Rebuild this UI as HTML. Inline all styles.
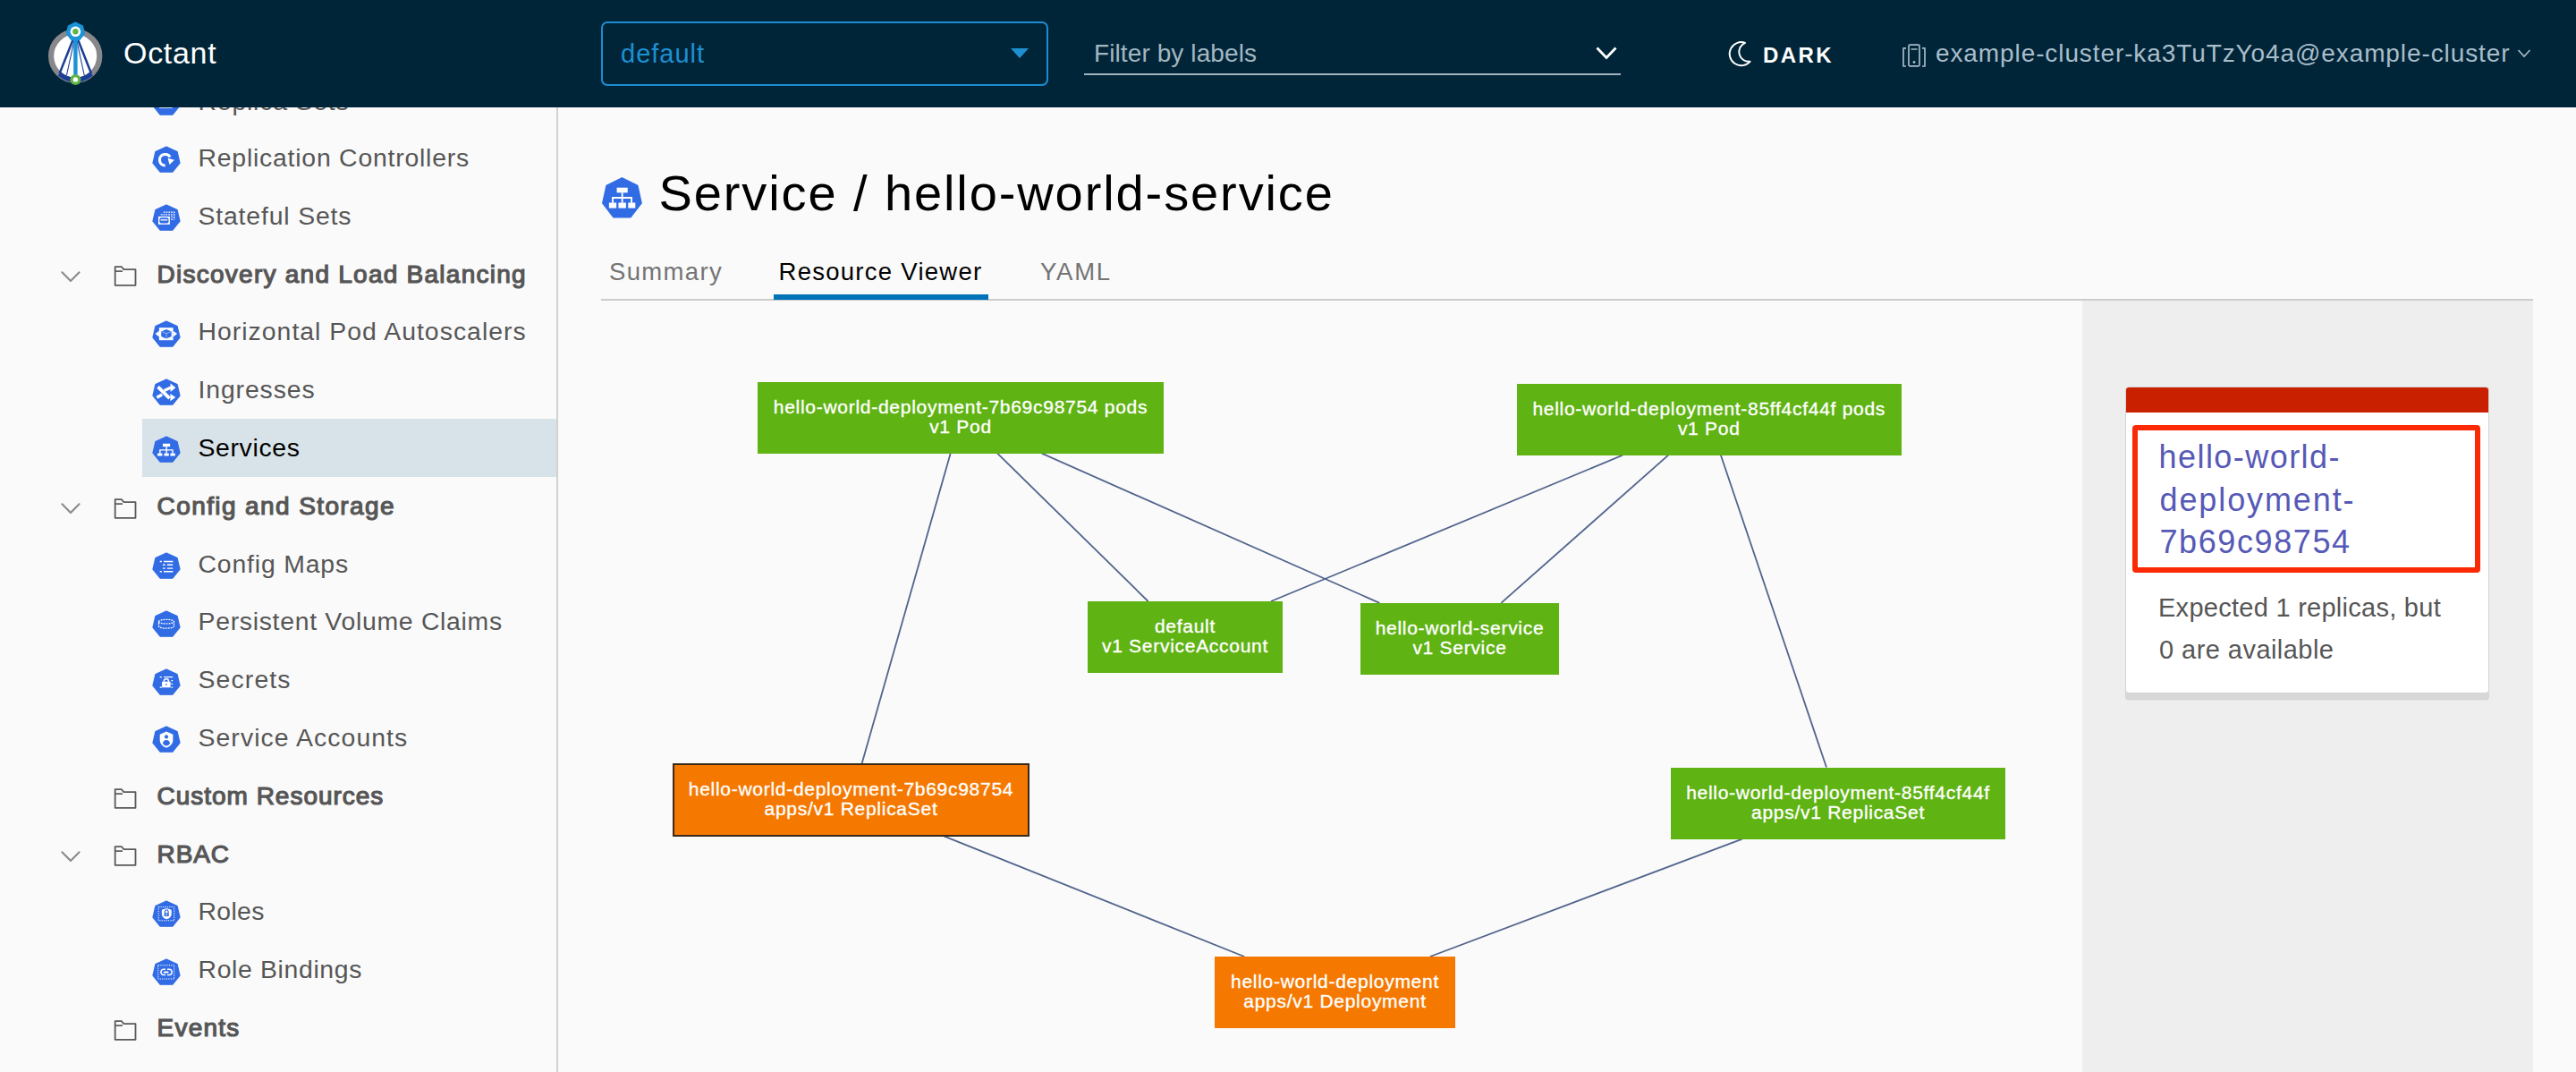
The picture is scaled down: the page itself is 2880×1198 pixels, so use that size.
<!DOCTYPE html>
<html><head><meta charset="utf-8"><title>Octant</title>
<style>
html,body{margin:0;padding:0;}
body{width:2880px;height:1198px;overflow:hidden;position:relative;background:#fafafa;font-family:"Liberation Sans", sans-serif;}
.t{position:absolute;white-space:nowrap;line-height:1;}
.r{position:absolute;}
svg{overflow:visible;}
.node{position:absolute;display:flex;padding-bottom:2px;box-sizing:border-box;align-items:center;justify-content:center;text-align:center;color:#fff;font-size:21px;line-height:22px;letter-spacing:0.72px;-webkit-text-stroke:0.35px #fff;}
</style></head><body>
<div class="r" style="left:0;top:120px;width:622px;height:1078px;background:#fafafa"></div>
<div class="r" style="left:622px;top:120px;width:2px;height:1078px;background:#d2d2d2"></div>
<div class="r" style="left:158.5px;top:468px;width:463.5px;height:65px;background:#d8e3e9;"></div>
<svg class="r" style="left:171.00px;top:99.50px" width="30" height="30" viewBox="0 0 30 30"><path d="M15.00 0.00 L27.04 5.80 L30.01 18.83 L21.68 29.27 L8.32 29.27 L-0.01 18.83 L2.96 5.80Z" transform="scale(1,0.965)" fill="#326ce5" stroke="#326ce5" stroke-width="1.3" stroke-linejoin="round"/><rect x="8" y="11" width="13" height="9" fill="none" stroke="#fff" stroke-width="1.6"/></svg>
<div class="t" style="left:221.50px;top:98.66px;font-size:28.4px;color:#565656;font-weight:400;letter-spacing:0.8px;">Replica Sets</div>
<svg class="r" style="left:171.00px;top:164.30px" width="30" height="30" viewBox="0 0 30 30"><path d="M15.00 0.00 L27.04 5.80 L30.01 18.83 L21.68 29.27 L8.32 29.27 L-0.01 18.83 L2.96 5.80Z" transform="scale(1,0.965)" fill="#326ce5" stroke="#326ce5" stroke-width="1.3" stroke-linejoin="round"/><path d="M19.11 11.58 A6.25 6.25 0 1 0 13.7 20.95" fill="none" stroke="#fff" stroke-width="3.1"/><path d="M16.6 12.8 L24 14.7 L18.5 20Z" fill="#fff"/></svg>
<div class="t" style="left:221.50px;top:161.96px;font-size:28.4px;color:#565656;font-weight:400;letter-spacing:0.773px;">Replication Controllers</div>
<svg class="r" style="left:171.00px;top:229.10px" width="30" height="30" viewBox="0 0 30 30"><path d="M15.00 0.00 L27.04 5.80 L30.01 18.83 L21.68 29.27 L8.32 29.27 L-0.01 18.83 L2.96 5.80Z" transform="scale(1,0.965)" fill="#326ce5" stroke="#326ce5" stroke-width="1.3" stroke-linejoin="round"/><path d="M11.8 8.2 H23.7 V16.8" fill="none" stroke="#fff" stroke-width="1.3" stroke-dasharray="1.8 1"/><path d="M8.8 10.8 H21.1 V17.9" fill="none" stroke="#fff" stroke-width="1.3" stroke-dasharray="1.8 1"/><rect x="6" y="12.9" width="12.9" height="8.9" fill="#fff"/><rect x="7.4" y="14.2" width="10.1" height="6.4" rx="1.8" fill="#326ce5"/><rect x="8.6" y="16.2" width="7.7" height="1.3" fill="#fff"/></svg>
<div class="t" style="left:221.50px;top:226.76px;font-size:28.4px;color:#565656;font-weight:400;letter-spacing:0.833px;">Stateful Sets</div>
<svg class="r" style="left:67px;top:301.50px" width="24" height="14" viewBox="0 0 24 14"><path d="M2.4 2.3 L12 12 L21.6 2.3" fill="none" stroke="#8a8a8a" stroke-width="2.1" stroke-linecap="round" stroke-linejoin="round"/></svg>
<svg class="r" style="left:126px;top:296.40px" width="28" height="25" viewBox="0 0 28 25"><path d="M2.7 2.2 H10 L12.4 5.1 H25.5 V22.8 H2.7Z" fill="none" stroke="#5a5a5a" stroke-width="1.8" stroke-linejoin="round"/><path d="M2.7 7.1 H11" fill="none" stroke="#5a5a5a" stroke-width="1.7"/></svg>
<div class="t" style="left:175.60px;top:292.70px;font-size:28px;color:#565656;font-weight:400;letter-spacing:1.251px;-webkit-text-stroke:1.2px #565656;">Discovery and Load Balancing</div>
<svg class="r" style="left:171.00px;top:358.70px" width="30" height="30" viewBox="0 0 30 30"><path d="M15.00 0.00 L27.04 5.80 L30.01 18.83 L21.68 29.27 L8.32 29.27 L-0.01 18.83 L2.96 5.80Z" transform="scale(1,0.965)" fill="#326ce5" stroke="#326ce5" stroke-width="1.3" stroke-linejoin="round"/><rect x="6.9" y="7.2" width="15.7" height="14" fill="#fff"/><path d="M15 9.1 L20.7 11.5 V17 L15 19.4 L9.2 17 V11.5Z" fill="#326ce5"/><path d="M9.7 11.7 L15 13.6 L20.2 11.7 M15 13.6 V19" fill="none" stroke="#8fb0f5" stroke-width="1"/><path d="M2.6 14.1 L6.9 10.8 V17.4Z M27.1 14.1 L22.6 10.8 V17.4Z" fill="#fff"/></svg>
<div class="t" style="left:221.50px;top:356.36px;font-size:28.4px;color:#565656;font-weight:400;letter-spacing:1.012px;">Horizontal Pod Autoscalers</div>
<svg class="r" style="left:171.00px;top:423.50px" width="30" height="30" viewBox="0 0 30 30"><path d="M15.00 0.00 L27.04 5.80 L30.01 18.83 L21.68 29.27 L8.32 29.27 L-0.01 18.83 L2.96 5.80Z" transform="scale(1,0.965)" fill="#326ce5" stroke="#326ce5" stroke-width="1.3" stroke-linejoin="round"/><path d="M5.6 8.4 L18.6 21.2" fill="none" stroke="#fff" stroke-width="3.8"/><path d="M12.6 12.4 L20.2 9.1" fill="none" stroke="#fff" stroke-width="3.3"/><path d="M4.4 20.2 L10.2 17" fill="none" stroke="#fff" stroke-width="3.4"/><path d="M19.6 4.4 L25.4 9.2 L19.6 14Z M19.4 15.9 L25.3 20.1 L19.4 24.3Z" fill="#fff"/></svg>
<div class="t" style="left:221.50px;top:421.16px;font-size:28.4px;color:#565656;font-weight:400;letter-spacing:0.875px;">Ingresses</div>
<svg class="r" style="left:171.00px;top:488.30px" width="30" height="30" viewBox="0 0 30 30"><path d="M15.00 0.00 L27.04 5.80 L30.01 18.83 L21.68 29.27 L8.32 29.27 L-0.01 18.83 L2.96 5.80Z" transform="scale(1,0.965)" fill="#326ce5" stroke="#326ce5" stroke-width="1.3" stroke-linejoin="round"/><rect x="11" y="7.8" width="8.2" height="3.3" fill="#fff"/><path d="M15.15 11 V18.8 M7.9 18.8 V14.85 H22 V18.8" fill="none" stroke="#fff" stroke-width="1.4"/><rect x="5.1" y="18.6" width="5.3" height="2.9" fill="#fff"/><rect x="12.5" y="18.6" width="5.3" height="2.9" fill="#fff"/><rect x="19.4" y="18.6" width="5.4" height="2.9" fill="#fff"/></svg>
<div class="t" style="left:221.50px;top:485.96px;font-size:28.4px;color:#000;font-weight:400;letter-spacing:0.643px;">Services</div>
<svg class="r" style="left:67px;top:560.70px" width="24" height="14" viewBox="0 0 24 14"><path d="M2.4 2.3 L12 12 L21.6 2.3" fill="none" stroke="#8a8a8a" stroke-width="2.1" stroke-linecap="round" stroke-linejoin="round"/></svg>
<svg class="r" style="left:126px;top:555.60px" width="28" height="25" viewBox="0 0 28 25"><path d="M2.7 2.2 H10 L12.4 5.1 H25.5 V22.8 H2.7Z" fill="none" stroke="#5a5a5a" stroke-width="1.8" stroke-linejoin="round"/><path d="M2.7 7.1 H11" fill="none" stroke="#5a5a5a" stroke-width="1.7"/></svg>
<div class="t" style="left:175.60px;top:551.90px;font-size:28px;color:#565656;font-weight:400;letter-spacing:1.394px;-webkit-text-stroke:1.2px #565656;">Config and Storage</div>
<svg class="r" style="left:171.00px;top:617.90px" width="30" height="30" viewBox="0 0 30 30"><path d="M15.00 0.00 L27.04 5.80 L30.01 18.83 L21.68 29.27 L8.32 29.27 L-0.01 18.83 L2.96 5.80Z" transform="scale(1,0.965)" fill="#326ce5" stroke="#326ce5" stroke-width="1.3" stroke-linejoin="round"/><path d="M7.7 9.45 H9.9 M11 13.2 H13.7 M11 17.1 H13.7 M7.7 20.8 H9.9 M12 9.45 H22.4 M15.9 13.2 H22.2 M15.9 17.1 H22.2 M12 20.8 H22.4" fill="none" stroke="#fff" stroke-width="1.4"/></svg>
<div class="t" style="left:221.50px;top:615.56px;font-size:28.4px;color:#565656;font-weight:400;letter-spacing:0.82px;">Config Maps</div>
<svg class="r" style="left:171.00px;top:682.70px" width="30" height="30" viewBox="0 0 30 30"><path d="M15.00 0.00 L27.04 5.80 L30.01 18.83 L21.68 29.27 L8.32 29.27 L-0.01 18.83 L2.96 5.80Z" transform="scale(1,0.965)" fill="#326ce5" stroke="#326ce5" stroke-width="1.3" stroke-linejoin="round"/><path d="M6.5 11.8 A8.5 2.5 0 0 1 23.5 11.8 V16.7 A8.5 2.5 0 0 1 6.5 16.7Z" fill="none" stroke="#fff" stroke-width="1.3" stroke-dasharray="1.9 1"/><path d="M6.5 11.8 A8.5 2.2 0 0 0 23.5 11.8" fill="none" stroke="#fff" stroke-width="1.2" stroke-dasharray="1.9 1"/></svg>
<div class="t" style="left:221.50px;top:680.36px;font-size:28.4px;color:#565656;font-weight:400;letter-spacing:0.704px;">Persistent Volume Claims</div>
<svg class="r" style="left:171.00px;top:747.50px" width="30" height="30" viewBox="0 0 30 30"><path d="M15.00 0.00 L27.04 5.80 L30.01 18.83 L21.68 29.27 L8.32 29.27 L-0.01 18.83 L2.96 5.80Z" transform="scale(1,0.965)" fill="#326ce5" stroke="#326ce5" stroke-width="1.3" stroke-linejoin="round"/><path d="M7.7 8.7 H9.9 M12.2 8.7 H22.2 M7.7 20.1 H9.9 M20.4 20.1 H22.2 M20.4 12.7 H22.2 M20.4 16.4 H22.2" fill="none" stroke="#fff" stroke-width="1.3"/><rect x="10.1" y="13.8" width="9.5" height="6.5" fill="#fff"/><path d="M12.4 13.9 V12.9 A2.5 2.1 0 0 1 17.4 12.9 V13.9" fill="none" stroke="#fff" stroke-width="1.6"/><circle cx="14.9" cy="16.8" r="0.9" fill="#326ce5"/></svg>
<div class="t" style="left:221.50px;top:745.16px;font-size:28.4px;color:#565656;font-weight:400;letter-spacing:1.133px;">Secrets</div>
<svg class="r" style="left:171.00px;top:812.30px" width="30" height="30" viewBox="0 0 30 30"><path d="M15.00 0.00 L27.04 5.80 L30.01 18.83 L21.68 29.27 L8.32 29.27 L-0.01 18.83 L2.96 5.80Z" transform="scale(1,0.965)" fill="#326ce5" stroke="#326ce5" stroke-width="1.3" stroke-linejoin="round"/><path d="M15 5.6 L22.4 8.7 V15 C22.4 19.5 18.8 22.3 15 23.7 C11.2 22.3 7.7 19.5 7.7 15 V8.7Z" fill="#fff"/><circle cx="15" cy="11.4" r="2.1" fill="#326ce5"/><path d="M11 19 C11 16.5 12.8 15.1 15 15.1 C17.2 15.1 19 16.5 19 19 C17.8 20.5 16.5 21.2 15 21.6 C13.5 21.2 12.2 20.5 11 19Z" fill="#326ce5"/></svg>
<div class="t" style="left:221.50px;top:809.96px;font-size:28.4px;color:#565656;font-weight:400;letter-spacing:1.067px;">Service Accounts</div>
<svg class="r" style="left:126px;top:879.60px" width="28" height="25" viewBox="0 0 28 25"><path d="M2.7 2.2 H10 L12.4 5.1 H25.5 V22.8 H2.7Z" fill="none" stroke="#5a5a5a" stroke-width="1.8" stroke-linejoin="round"/><path d="M2.7 7.1 H11" fill="none" stroke="#5a5a5a" stroke-width="1.7"/></svg>
<div class="t" style="left:175.60px;top:875.90px;font-size:28px;color:#565656;font-weight:400;letter-spacing:0.975px;-webkit-text-stroke:1.2px #565656;">Custom Resources</div>
<svg class="r" style="left:67px;top:949.50px" width="24" height="14" viewBox="0 0 24 14"><path d="M2.4 2.3 L12 12 L21.6 2.3" fill="none" stroke="#8a8a8a" stroke-width="2.1" stroke-linecap="round" stroke-linejoin="round"/></svg>
<svg class="r" style="left:126px;top:944.40px" width="28" height="25" viewBox="0 0 28 25"><path d="M2.7 2.2 H10 L12.4 5.1 H25.5 V22.8 H2.7Z" fill="none" stroke="#5a5a5a" stroke-width="1.8" stroke-linejoin="round"/><path d="M2.7 7.1 H11" fill="none" stroke="#5a5a5a" stroke-width="1.7"/></svg>
<div class="t" style="left:175.60px;top:940.70px;font-size:28px;color:#565656;font-weight:400;letter-spacing:0.855px;-webkit-text-stroke:1.2px #565656;">RBAC</div>
<svg class="r" style="left:171.00px;top:1006.70px" width="30" height="30" viewBox="0 0 30 30"><path d="M15.00 0.00 L27.04 5.80 L30.01 18.83 L21.68 29.27 L8.32 29.27 L-0.01 18.83 L2.96 5.80Z" transform="scale(1,0.965)" fill="#326ce5" stroke="#326ce5" stroke-width="1.3" stroke-linejoin="round"/><rect x="6.2" y="6.5" width="17.5" height="15.3" fill="none" stroke="#fff" stroke-width="1" stroke-dasharray="1.2 1.2"/><path d="M15.3 8 L20.7 9.8 V14.5 C20.7 17.5 18.3 19.4 15.3 20.3 C12.3 19.4 9.9 17.5 9.9 14.5 V9.8Z" fill="#fff"/><rect x="12.6" y="13.2" width="5.2" height="3.7" fill="#326ce5"/><path d="M13.4 13.3 V11.7 A1.85 1.9 0 0 1 17.1 11.7 V13.3" fill="none" stroke="#326ce5" stroke-width="1.2"/><circle cx="15.2" cy="15" r="0.8" fill="#fff"/></svg>
<div class="t" style="left:221.50px;top:1004.36px;font-size:28.4px;color:#565656;font-weight:400;letter-spacing:0.325px;">Roles</div>
<svg class="r" style="left:171.00px;top:1071.50px" width="30" height="30" viewBox="0 0 30 30"><path d="M15.00 0.00 L27.04 5.80 L30.01 18.83 L21.68 29.27 L8.32 29.27 L-0.01 18.83 L2.96 5.80Z" transform="scale(1,0.965)" fill="#326ce5" stroke="#326ce5" stroke-width="1.3" stroke-linejoin="round"/><rect x="5.8" y="6.7" width="17.9" height="15.3" fill="none" stroke="#fff" stroke-width="1" stroke-dasharray="1.2 1.2"/><path d="M14 11.2 H11.6 A3.2 3.2 0 0 0 11.6 17.5 H14 M16 11.2 H18.6 A3.2 3.2 0 0 1 18.6 17.5 H16" fill="none" stroke="#fff" stroke-width="1.5"/><rect x="11.8" y="13.5" width="5.8" height="2" rx="1" fill="#fff"/></svg>
<div class="t" style="left:221.50px;top:1069.16px;font-size:28.4px;color:#565656;font-weight:400;letter-spacing:0.646px;">Role Bindings</div>
<svg class="r" style="left:126px;top:1138.80px" width="28" height="25" viewBox="0 0 28 25"><path d="M2.7 2.2 H10 L12.4 5.1 H25.5 V22.8 H2.7Z" fill="none" stroke="#5a5a5a" stroke-width="1.8" stroke-linejoin="round"/><path d="M2.7 7.1 H11" fill="none" stroke="#5a5a5a" stroke-width="1.7"/></svg>
<div class="t" style="left:175.60px;top:1135.10px;font-size:28px;color:#565656;font-weight:400;letter-spacing:1.208px;-webkit-text-stroke:1.2px #565656;">Events</div>
<div class="r" style="left:0;top:0;width:2880px;height:120px;background:#002538;z-index:5"></div>
<div id="hdr" style="position:absolute;left:0;top:0;width:2880px;height:120px;z-index:6">
<svg class="r" style="left:48px;top:20px" width="72" height="80" viewBox="48 20 72 80">
<circle cx="84.2" cy="62.6" r="27.1" fill="#fff" stroke="#88878c" stroke-width="6.2"/>
<path d="M66.2 82.5 Q84.4 96.5 102.4 82.5" fill="none" stroke="#1b3f94" stroke-width="5.2"/>
<path d="M82.6 42 L66.6 82 M86.2 42 L102 82" stroke="#1b3f94" stroke-width="2.5"/>
<path d="M82.8 46 L74.5 84 M86 46 L94.2 84" stroke="#1b3f94" stroke-width="1.1"/>
<path d="M84.4 40 V86" stroke="#1a93d8" stroke-width="4.4"/>
<path d="M84.40 25.20 L92.37 29.04 L94.34 37.67 L88.83 44.59 L79.97 44.59 L74.46 37.67 L76.43 29.04Z" fill="#1a93d8" stroke="#1a93d8" stroke-width="1.4" stroke-linejoin="round"/>
<circle cx="84.4" cy="35.3" r="5.8" fill="#fff"/><circle cx="84.4" cy="35.3" r="3.2" fill="#62b346"/>
<circle cx="84.4" cy="88.9" r="6" fill="#62b346"/><circle cx="84.4" cy="88.9" r="2.7" fill="#fff"/>
</svg>
<div class="t" style="left:138.00px;top:42.47px;font-size:34px;color:#fff;font-weight:400;letter-spacing:0.7px;">Octant</div>
<div class="r" style="left:672px;top:24px;width:496px;height:68px;border:2px solid #1d8dd0;border-radius:7px"></div>
<div class="t" style="left:694.00px;top:46.45px;font-size:29px;color:#1e90d2;font-weight:400;letter-spacing:1px;">default</div>
<svg class="r" style="left:1129px;top:53px" width="22" height="13" viewBox="0 0 22 13"><path d="M1 1 H21 L11 12Z" fill="#1e90d2"/></svg>
<div class="t" style="left:1223.00px;top:45.60px;font-size:28px;color:#a3b7c2;font-weight:400;letter-spacing:0.1px;">Filter by labels</div>
<div class="r" style="left:1212px;top:82px;width:600px;height:2px;background:#9fb3bf;"></div>
<svg class="r" style="left:1783px;top:51px" width="26" height="17" viewBox="0 0 26 17"><path d="M2.5 2.5 L13 13.5 L23.5 2.5" fill="none" stroke="#fff" stroke-width="2.8"/></svg>
<svg class="r" style="left:1930px;top:44px" width="32" height="34" viewBox="0 0 32 34"><path d="M21.1 3.8 A13.1 13.1 0 1 0 26.7 24.7 A10.9 10.9 0 0 1 21.1 3.8Z" fill="none" stroke="#fff" stroke-width="1.9" stroke-linejoin="round"/></svg>
<div class="t" style="left:1971.00px;top:50.18px;font-size:24px;color:#fff;font-weight:700;letter-spacing:2.4px;">DARK</div>
<svg class="r" style="left:2124px;top:47px" width="32" height="30" viewBox="0 0 32 30"><path d="M7 6.8 H4 V27 H7 M25 6.8 H28 V27 H25" fill="none" stroke="#a6bac6" stroke-width="1.7" stroke-linejoin="round"/><rect x="10" y="3.2" width="12" height="23.6" rx="1.3" fill="none" stroke="#a6bac6" stroke-width="1.7"/><path d="M12.5 8 H19.5" stroke="#a6bac6" stroke-width="1.5"/><circle cx="16" cy="22.5" r="1.4" fill="#a6bac6"/></svg>
<div class="t" style="left:2164.00px;top:46.30px;font-size:28px;color:#a9bdca;font-weight:400;letter-spacing:0.9px;">example-cluster-ka3TuTzYo4a@example-cluster</div>
<svg class="r" style="left:2814px;top:54px" width="16" height="11" viewBox="0 0 16 11"><path d="M1.5 2 L8 9 L14.5 2" fill="none" stroke="#a9bdca" stroke-width="1.6"/></svg>
</div>
<div class="r" style="left:624px;top:120px;width:2256px;height:1078px;background:#fafafa"></div>
<svg class="r" style="left:674.4px;top:198.6px" width="42.9" height="44.6" viewBox="0 0 30 30" preserveAspectRatio="none"><path d="M15.00 0.00 L27.04 5.80 L30.01 18.83 L21.68 29.27 L8.32 29.27 L-0.01 18.83 L2.96 5.80Z" fill="#326ce5" stroke="#326ce5" stroke-width="1.3" stroke-linejoin="round"/><rect x="10.9" y="7.2" width="8.5" height="3.8" fill="#fff"/><path d="M15.15 11 V18.6 M7.7 18.6 V14.8 H22.4 V18.6" fill="none" stroke="#fff" stroke-width="1.3"/><rect x="4.8" y="18.5" width="5.8" height="4.1" fill="#fff"/><rect x="12.2" y="18.5" width="5.9" height="4.1" fill="#fff"/><rect x="19.8" y="18.5" width="5.6" height="4.1" fill="#fff"/></svg>
<div class="t" style="left:736.50px;top:187.60px;font-size:56px;color:#000;font-weight:400;letter-spacing:1.9px;">Service / hello-world-service</div>
<div class="t" style="left:681.00px;top:289.52px;font-size:27.5px;color:#747474;font-weight:400;letter-spacing:1.35px;">Summary</div>
<div class="t" style="left:870.50px;top:289.52px;font-size:27.5px;color:#000;font-weight:400;letter-spacing:1.27px;">Resource Viewer</div>
<div class="t" style="left:1163.00px;top:289.52px;font-size:27.5px;color:#747474;font-weight:400;letter-spacing:1.75px;">YAML</div>
<div class="r" style="left:672px;top:334px;width:2160px;height:2px;background:#cccccc;"></div>
<div class="r" style="left:865px;top:329px;width:240px;height:6px;background:#0072b8;"></div>
<div class="r" style="left:2328px;top:336px;width:504px;height:862px;background:#eeeeee;"></div>
<svg class="r" style="left:0;top:0" width="2880" height="1198"><line x1="1062.7" y1="506.6" x2="963.6" y2="853.2" stroke="#51648c" stroke-width="1.8"/><line x1="1115.1" y1="506.6" x2="1283.6" y2="672" stroke="#51648c" stroke-width="1.8"/><line x1="1164.6" y1="506.6" x2="1542.4" y2="673.9" stroke="#51648c" stroke-width="1.8"/><line x1="1814.1" y1="508.7" x2="1421" y2="672" stroke="#51648c" stroke-width="1.8"/><line x1="1865.2" y1="508.7" x2="1678.3" y2="673.9" stroke="#51648c" stroke-width="1.8"/><line x1="1923.9" y1="508.7" x2="2042" y2="857.5" stroke="#51648c" stroke-width="1.8"/><line x1="1055.2" y1="934.3" x2="1391.1" y2="1069" stroke="#51648c" stroke-width="1.8"/><line x1="1947.8" y1="937.6" x2="1598.9" y2="1069" stroke="#51648c" stroke-width="1.8"/></svg>
<div class="node" style="left:847px;top:427px;width:454px;height:80px;background:#5fb313;"><div>hello-world-deployment-7b69c98754 pods<br>v1 Pod</div></div>
<div class="node" style="left:1695.5px;top:429px;width:430.5px;height:79.60000000000002px;background:#5fb313;"><div>hello-world-deployment-85ff4cf44f pods<br>v1 Pod</div></div>
<div class="node" style="left:1216px;top:672px;width:218px;height:80px;background:#5fb313;"><div>default<br>v1 ServiceAccount</div></div>
<div class="node" style="left:1521px;top:674px;width:222px;height:79.5px;background:#5fb313;"><div>hello-world-service<br>v1 Service</div></div>
<div class="node" style="left:752px;top:853px;width:399px;height:81.5px;background:#f57800;border:2px solid #3a2a1a;box-sizing:border-box;"><div>hello-world-deployment-7b69c98754<br>apps/v1 ReplicaSet</div></div>
<div class="node" style="left:1868px;top:858px;width:374px;height:80px;background:#5fb313;"><div>hello-world-deployment-85ff4cf44f<br>apps/v1 ReplicaSet</div></div>
<div class="node" style="left:1358px;top:1069px;width:269px;height:80px;background:#f57800;"><div>hello-world-deployment<br>apps/v1 Deployment</div></div>
<div class="r" style="left:2376px;top:432px;width:406.5px;height:343px;background:#fff;border:1.6px solid #d4d4d4;box-sizing:border-box;border-radius:4px;box-shadow:0 7.5px 0 0 #d7d7d7;overflow:hidden"><div style="position:absolute;left:0;top:0;right:0;height:28px;background:#c92100"></div></div>
<div class="r" style="left:2384.2px;top:475.3px;width:389.3px;height:164.5px;border:6.5px solid #fb2a04;box-sizing:border-box;border-radius:4px 4px 4px 4px"></div>
<div class="t" style="left:2413.50px;top:492.53px;font-size:36px;color:#5659b6;font-weight:400;letter-spacing:1.45px;">hello-world-</div>
<div class="t" style="left:2414.50px;top:540.73px;font-size:36px;color:#5659b6;font-weight:400;letter-spacing:1.9px;">deployment-</div>
<div class="t" style="left:2414.50px;top:588.13px;font-size:36px;color:#5659b6;font-weight:400;letter-spacing:1.6px;">7b69c98754</div>
<div class="t" style="left:2413.00px;top:664.85px;font-size:29px;color:#565656;font-weight:400;letter-spacing:0.27px;">Expected 1 replicas, but</div>
<div class="t" style="left:2414.00px;top:712.45px;font-size:29px;color:#565656;font-weight:400;letter-spacing:0.45px;">0 are available</div>
</body></html>
